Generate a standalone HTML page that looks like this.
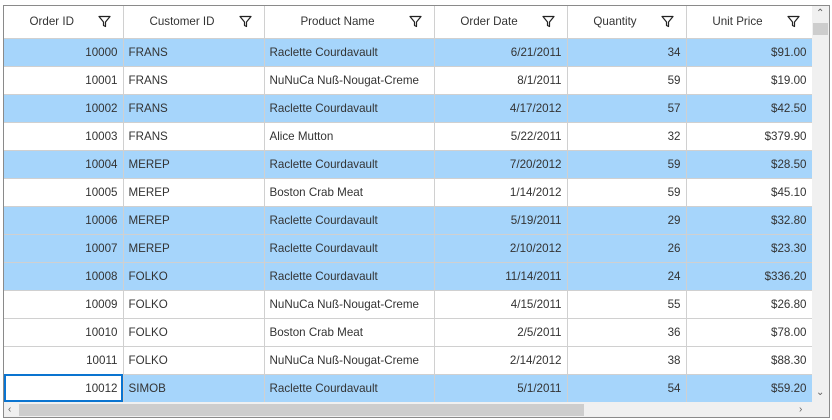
<!DOCTYPE html>
<html><head><style>
*{margin:0;padding:0;box-sizing:border-box}
body{width:832px;height:420px;background:#fff;font-family:"Segoe UI","Liberation Sans",sans-serif;font-size:11.6px;color:#333;position:relative;overflow:hidden}
#g{position:absolute;left:3px;top:5px;width:827px;height:413px;border:1px solid #8a8a8a;overflow:hidden}
table{border-collapse:collapse;table-layout:fixed;position:absolute;left:0;top:0}
td,th{border-right:1px solid #d0d0d0;border-bottom:1px solid #d0d0d0;padding:0 5px;white-space:nowrap;overflow:hidden}
th{height:32px;font-weight:normal;color:#333;position:relative;text-align:center;padding-right:28px}
th svg{position:absolute;right:12px;top:9px}
td{height:28px}
.r{text-align:right}
tr.s td{background:#a6d5fb}
td.cur{outline:2px solid #0a74d0;outline-offset:-2px;background:#fff!important}
#vs{position:absolute;left:808px;top:0;width:17px;height:396px;background:#f0f0f0}
#vt{position:absolute;left:1px;top:17px;width:15px;height:12px;background:#cdcdcd}
#hs{position:absolute;left:0;top:396px;width:808px;height:16px;background:#f0f0f0}
#ht{position:absolute;left:15px;top:2px;width:565px;height:12px;background:#cdcdcd}
#cn{position:absolute;left:808px;top:396px;width:17px;height:16px;background:#f0f0f0}
.ar{position:absolute;font-size:10px;color:#606060;line-height:10px}
</style></head><body>
<div id="g">
<table>
<colgroup><col style="width:119px"><col style="width:141px"><col style="width:170px"><col style="width:133px"><col style="width:119px"><col style="width:126px"></colgroup>
<tr>
<th>Order ID<svg width="13" height="13" viewBox="0 0 13 13"><path d="M1 1.5H12L7.5 7V11.5L5.5 10.5V7Z" fill="none" stroke="#222" stroke-width="1.2" stroke-linejoin="round"/></svg></th>
<th>Customer ID<svg width="13" height="13" viewBox="0 0 13 13"><path d="M1 1.5H12L7.5 7V11.5L5.5 10.5V7Z" fill="none" stroke="#222" stroke-width="1.2" stroke-linejoin="round"/></svg></th>
<th>Product Name<svg width="13" height="13" viewBox="0 0 13 13"><path d="M1 1.5H12L7.5 7V11.5L5.5 10.5V7Z" fill="none" stroke="#222" stroke-width="1.2" stroke-linejoin="round"/></svg></th>
<th>Order Date<svg width="13" height="13" viewBox="0 0 13 13"><path d="M1 1.5H12L7.5 7V11.5L5.5 10.5V7Z" fill="none" stroke="#222" stroke-width="1.2" stroke-linejoin="round"/></svg></th>
<th>Quantity<svg width="13" height="13" viewBox="0 0 13 13"><path d="M1 1.5H12L7.5 7V11.5L5.5 10.5V7Z" fill="none" stroke="#222" stroke-width="1.2" stroke-linejoin="round"/></svg></th>
<th>Unit Price<svg width="13" height="13" viewBox="0 0 13 13"><path d="M1 1.5H12L7.5 7V11.5L5.5 10.5V7Z" fill="none" stroke="#222" stroke-width="1.2" stroke-linejoin="round"/></svg></th>
</tr>
<tr class="s"><td class="r">10000</td><td>FRANS</td><td>Raclette Courdavault</td><td class="r">6/21/2011</td><td class="r">34</td><td class="r">$91.00</td></tr>
<tr><td class="r">10001</td><td>FRANS</td><td>NuNuCa Nuß-Nougat-Creme</td><td class="r">8/1/2011</td><td class="r">59</td><td class="r">$19.00</td></tr>
<tr class="s"><td class="r">10002</td><td>FRANS</td><td>Raclette Courdavault</td><td class="r">4/17/2012</td><td class="r">57</td><td class="r">$42.50</td></tr>
<tr><td class="r">10003</td><td>FRANS</td><td>Alice Mutton</td><td class="r">5/22/2011</td><td class="r">32</td><td class="r">$379.90</td></tr>
<tr class="s"><td class="r">10004</td><td>MEREP</td><td>Raclette Courdavault</td><td class="r">7/20/2012</td><td class="r">59</td><td class="r">$28.50</td></tr>
<tr><td class="r">10005</td><td>MEREP</td><td>Boston Crab Meat</td><td class="r">1/14/2012</td><td class="r">59</td><td class="r">$45.10</td></tr>
<tr class="s"><td class="r">10006</td><td>MEREP</td><td>Raclette Courdavault</td><td class="r">5/19/2011</td><td class="r">29</td><td class="r">$32.80</td></tr>
<tr class="s"><td class="r">10007</td><td>MEREP</td><td>Raclette Courdavault</td><td class="r">2/10/2012</td><td class="r">26</td><td class="r">$23.30</td></tr>
<tr class="s"><td class="r">10008</td><td>FOLKO</td><td>Raclette Courdavault</td><td class="r">11/14/2011</td><td class="r">24</td><td class="r">$336.20</td></tr>
<tr><td class="r">10009</td><td>FOLKO</td><td>NuNuCa Nuß-Nougat-Creme</td><td class="r">4/15/2011</td><td class="r">55</td><td class="r">$26.80</td></tr>
<tr><td class="r">10010</td><td>FOLKO</td><td>Boston Crab Meat</td><td class="r">2/5/2011</td><td class="r">36</td><td class="r">$78.00</td></tr>
<tr><td class="r">10011</td><td>FOLKO</td><td>NuNuCa Nuß-Nougat-Creme</td><td class="r">2/14/2012</td><td class="r">38</td><td class="r">$88.30</td></tr>
<tr class="s"><td class="r cur">10012</td><td>SIMOB</td><td>Raclette Courdavault</td><td class="r">5/1/2011</td><td class="r">54</td><td class="r">$59.20</td></tr>
</table>
<div id="vs"><div id="vt"></div><span class="ar" style="left:4px;top:3px">&#8963;</span><span class="ar" style="left:4px;top:382px">&#8964;</span></div>
<div id="hs"><div id="ht"></div><span class="ar" style="left:4px;top:3px">&lsaquo;</span><span class="ar" style="left:795px;top:3px">&rsaquo;</span></div>
<div id="cn"></div>
</div>
</body></html>
